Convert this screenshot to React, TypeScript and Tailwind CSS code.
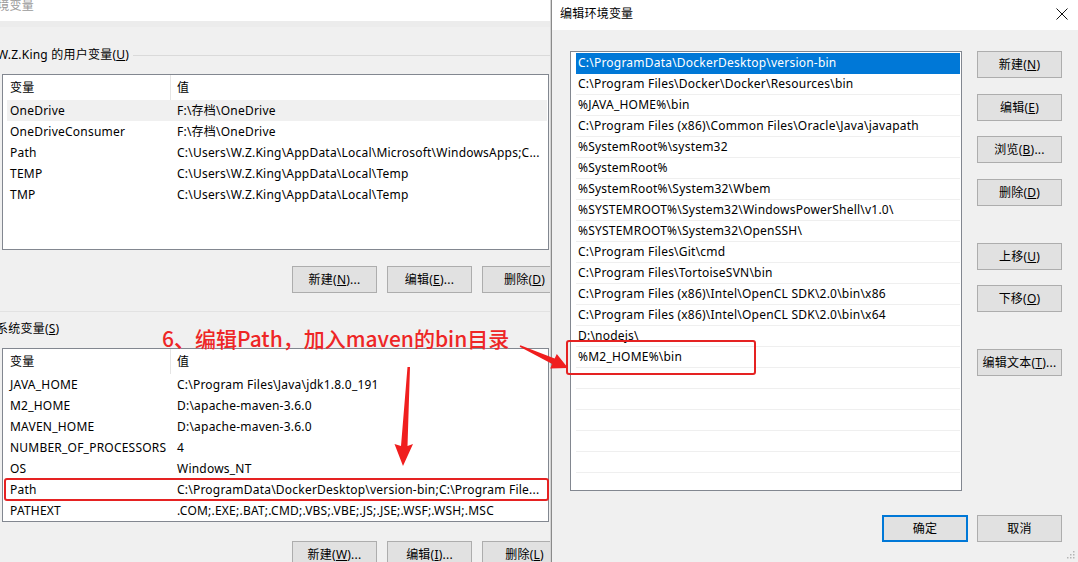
import React from "react";

const uiFont = { fontFamily: '"Noto Sans", "Noto Sans CJK SC", sans-serif', letterSpacing: "0.22px" };

const userVars = [
  ["OneDrive", "F:\\存档\\OneDrive"],
  ["OneDriveConsumer", "F:\\存档\\OneDrive"],
  ["Path", "C:\\Users\\W.Z.King\\AppData\\Local\\Microsoft\\WindowsApps;C..."],
  ["TEMP", "C:\\Users\\W.Z.King\\AppData\\Local\\Temp"],
  ["TMP", "C:\\Users\\W.Z.King\\AppData\\Local\\Temp"],
];

const sysVars = [
  ["JAVA_HOME", "C:\\Program Files\\Java\\jdk1.8.0_191"],
  ["M2_HOME", "D:\\apache-maven-3.6.0"],
  ["MAVEN_HOME", "D:\\apache-maven-3.6.0"],
  ["NUMBER_OF_PROCESSORS", "4"],
  ["OS", "Windows_NT"],
  ["Path", "C:\\ProgramData\\DockerDesktop\\version-bin;C:\\Program File..."],
  ["PATHEXT", ".COM;.EXE;.BAT;.CMD;.VBS;.VBE;.JS;.JSE;.WSF;.WSH;.MSC"],
];

const pathItems = [
  "C:\\ProgramData\\DockerDesktop\\version-bin",
  "C:\\Program Files\\Docker\\Docker\\Resources\\bin",
  "%JAVA_HOME%\\bin",
  "C:\\Program Files (x86)\\Common Files\\Oracle\\Java\\javapath",
  "%SystemRoot%\\system32",
  "%SystemRoot%",
  "%SystemRoot%\\System32\\Wbem",
  "%SYSTEMROOT%\\System32\\WindowsPowerShell\\v1.0\\",
  "%SYSTEMROOT%\\System32\\OpenSSH\\",
  "C:\\Program Files\\Git\\cmd",
  "C:\\Program Files\\TortoiseSVN\\bin",
  "C:\\Program Files (x86)\\Intel\\OpenCL SDK\\2.0\\bin\\x86",
  "C:\\Program Files (x86)\\Intel\\OpenCL SDK\\2.0\\bin\\x64",
  "D:\\nodejs\\",
  "%M2_HOME%\\bin",
];

function Btn({ label, hot, tail = "", w = "w-[85px]", primary = false }: { label: string; hot: string; tail?: string; w?: string; primary?: boolean }) {
  return (
    <div
      className={`${w} h-[27px] shrink-0 flex items-center justify-center bg-[#e1e1e1] text-[12px] text-black ${
        primary ? "border-2 border-[#0078d7]" : "border border-[#adadad]"
      }`}
    >
      {label}
      {hot && (
        <>
          (<span className="underline">{hot}</span>)
        </>
      )}
      {tail}
    </div>
  );
}

function VarTable({ rows, height, selected }: { rows: string[][]; height: string; selected?: number }) {
  return (
    <div className={`ml-[2px] w-[547px] ${height} border border-[#828790] bg-white pl-[4px] pr-[1px] overflow-hidden`}>
      <div className="flex h-[25px] items-center text-[12px]">
        <div className="w-[164px] pl-[3px] h-full flex items-center border-r border-[#e5e5e5]">变量</div>
        <div className="pl-[6px]">值</div>
      </div>
      {rows.map(([k, v], i) => (
        <div
          key={k + i}
          className={`flex h-[21px] items-center text-[12px] text-black ${i === selected ? "bg-[#f0f0f0]" : ""}`}
        >
          <div className="w-[164px] pl-[3px] whitespace-nowrap overflow-hidden">{k}</div>
          <div className="pl-[6px] whitespace-nowrap">{v}</div>
        </div>
      ))}
    </div>
  );
}

function LeftWindow() {
  return (
    <div className="w-[551px] h-full shrink-0 bg-[#f0f0f0] flex flex-col overflow-hidden border-r border-[#d4d4d4] [&>*]:shrink-0">
      <div className="h-[21px] bg-white flex items-start">
        <span className="ml-[-15px] mt-[-3px] text-[12px] text-[#9a9a9a]">环境变量</span>
      </div>
      <div className="h-[6px] bg-[#ececec]" />
      <div className="mt-[20px] flex items-center h-[16px]">
        <span className="ml-[-3px] text-[12px] text-black whitespace-nowrap">
          W.Z.King 的用户变量(<span className="underline">U</span>)
        </span>
        <div className="ml-[4px] flex-1 h-px bg-[#dadada]" />
      </div>
      <div className="mt-[11px]">
        <VarTable rows={userVars} height="h-[176px]" selected={0} />
      </div>
      <div className="mt-[16px] flex gap-[10px] pl-[292px]">
        <Btn label="新建" hot="N" tail="..." />
        <Btn label="编辑" hot="E" tail="..." />
        <Btn label="删除" hot="D" />
      </div>
      <div className="mt-[18px] h-px bg-[#e2e2e2]" />
      <div className="mt-[9px] h-[16px] flex items-center">
        <span className="ml-[-4px] text-[12px] text-black whitespace-nowrap">
          系统变量(<span className="underline">S</span>)
        </span>
      </div>
      <div className="mt-[11px]">
        <VarTable rows={sysVars} height="h-[174px]" />
      </div>
      <div className="mt-[19px] flex gap-[10px] pl-[292px]">
        <Btn label="新建" hot="W" tail="..." />
        <Btn label="编辑" hot="I" tail="..." />
        <Btn label="删除" hot="L" />
      </div>
    </div>
  );
}

function EditDialog() {
  const rows = Array.from({ length: 22 }, (_, i) => pathItems[i] ?? "");
  return (
    <div className="flex-1 h-full bg-[#f0f0f0] flex flex-col border-l border-[#8a8a8a] relative">
      <div className="h-[30px] bg-white flex items-center justify-between pl-[8px] pr-[9px]">
        <span className="text-[12px] text-black mt-[-2px]">编辑环境变量</span>
        <svg width="14" height="14" viewBox="0 0 14 14" className="mt-[-2px]">
          <path d="M1.5 1.5 L12.5 12.5 M12.5 1.5 L1.5 12.5" stroke="#111" strokeWidth="1" fill="none" />
        </svg>
      </div>
      <div className="flex pl-[18px] pt-[21px]">
        <div className="w-[392px] h-[440px] border border-[#828790] bg-white pl-[5px] pr-[1px] pt-px overflow-hidden">
          {rows.map((p, i) => (
            <div
              key={i}
              className={`h-[21px] flex items-center pl-[2px] text-[12px] whitespace-nowrap border-b ${
                i === 0 ? "bg-[#0078d7] text-white border-[#0078d7]" : "text-black border-[#efefef]"
              }`}
            >
              {p}
            </div>
          ))}
        </div>
        <div className="ml-[15px] flex flex-col">
          <Btn label="新建" hot="N" />
          <div className="mt-[16px]"><Btn label="编辑" hot="E" /></div>
          <div className="mt-[15px]"><Btn label="浏览" hot="B" tail="..." /></div>
          <div className="mt-[16px]"><Btn label="删除" hot="D" /></div>
          <div className="mt-[37px]"><Btn label="上移" hot="U" /></div>
          <div className="mt-[15px]"><Btn label="下移" hot="O" /></div>
          <div className="mt-[37px]"><Btn label="编辑文本" hot="T" tail="..." /></div>
        </div>
      </div>
      <div className="mt-[24px] flex justify-end gap-[9px] pr-[16px]">
        <Btn label="确定" hot="" w="w-[86px]" primary />
        <Btn label="取消" hot="" />
      </div>
      <svg width="8" height="8" viewBox="0 0 8 8" className="absolute right-[3px] bottom-[3px]">
        <rect x="6" y="0" width="1.5" height="1.5" fill="#b5b5b5" />
        <rect x="3" y="3" width="1.5" height="1.5" fill="#b5b5b5" />
        <rect x="6" y="3" width="1.5" height="1.5" fill="#b5b5b5" />
        <rect x="0" y="6" width="1.5" height="1.5" fill="#b5b5b5" />
        <rect x="3" y="6" width="1.5" height="1.5" fill="#b5b5b5" />
        <rect x="6" y="6" width="1.5" height="1.5" fill="#b5b5b5" />
      </svg>
    </div>
  );
}

export default function App() {
  return (
    <div className="relative w-[1078px] h-[562px] overflow-hidden flex bg-white" style={uiFont}>
      <LeftWindow />
      <EditDialog />

      {/* annotation layer */}
      <div
        className="absolute left-[162px] top-[325px] text-[21px] leading-[26px] font-medium text-[#ee2626] whitespace-nowrap"
        style={{ fontFamily: '"Noto Sans CJK SC", "Noto Sans", sans-serif', letterSpacing: "0px" }}
      >
        6、编辑Path，加入maven的bin目录
      </div>
      <div className="absolute left-[4px] top-[478px] w-[545px] h-[23px] border-2 border-[#e52222] rounded-[3px]" />
      <div className="absolute left-[566px] top-[340px] w-[190px] h-[35px] border-2 border-[#e52222] rounded-[3px]" />
      <svg className="absolute inset-0 pointer-events-none" width="1078" height="562">
        <polygon
          points="407.5,367 410,367 407.5,446 413,444 403,466 394.5,444 401,446"
          fill="#f01e1e"
        />
        <polygon
          points="520.3,345.3 554.7,358.6 556.8,354 568,368 550.2,368.6 552.2,364 519.7,346.7"
          fill="#f01e1e"
        />
      </svg>
    </div>
  );
}
